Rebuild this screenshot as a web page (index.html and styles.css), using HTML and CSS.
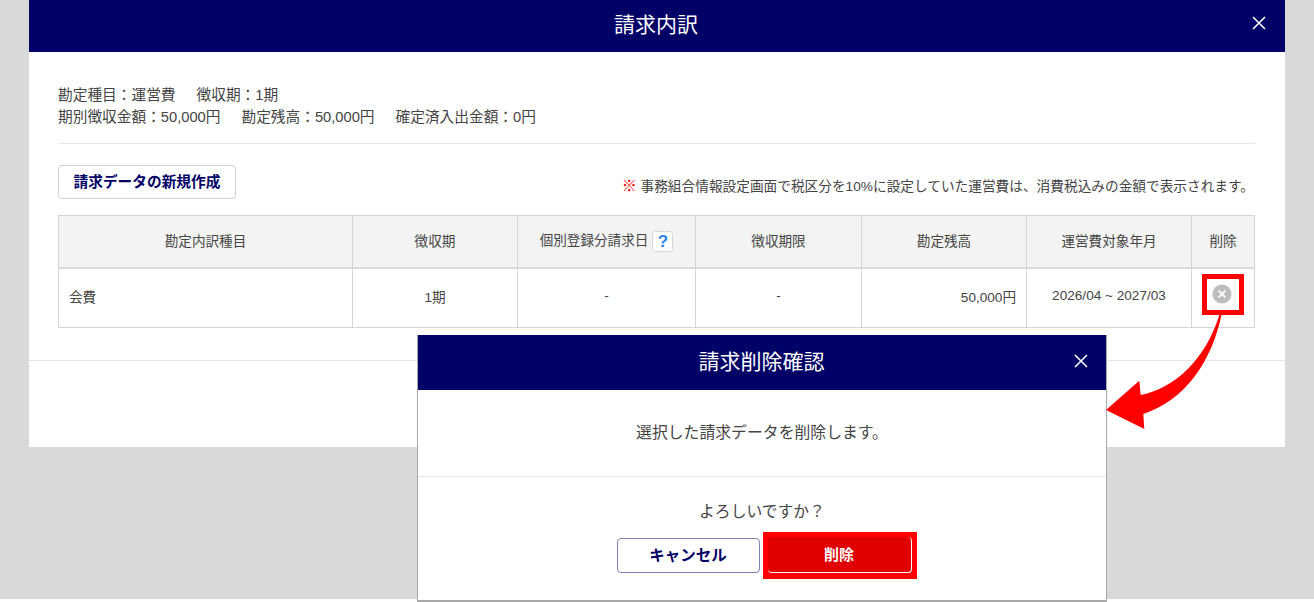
FILE: index.html
```html
<!DOCTYPE html>
<html lang="ja">
<head>
<meta charset="utf-8">
<title>請求内訳</title>
<link rel="stylesheet" href="styles.css">
</head>
<body>
<div class="stage">
  <main class="modal">
    <header class="modal-head">
      <h1 class="modal-title">請求内訳</h1>
      <svg class="close close-main" viewBox="0 0 14 14"><path d="M1 1l12 12M13 1L1 13"/></svg>
    </header>
    <section class="modal-body">
      <div class="summary">
        <p class="summary-line"><span>勘定種目：運営費</span><span>徴収期：1期</span></p>
        <p class="summary-line"><span>期別徴収金額：50,000円</span><span>勘定残高：50,000円</span><span>確定済入出金額：0円</span></p>
      </div>
      <div class="toolbar">
        <button class="btn-new">請求データの新規作成</button>
        <p class="note"><span class="note-mark">※</span> 事務組合情報設定画面で税区分を10%に設定していた運営費は、消費税込みの金額で表示されます。</p>
      </div>
      <table class="grid">
        <colgroup>
          <col class="c1"><col class="c2"><col class="c3"><col class="c4"><col class="c5"><col class="c6"><col class="c7">
        </colgroup>
        <thead>
          <tr>
            <th>勘定内訳種目</th>
            <th>徴収期</th>
            <th>個別登録分請求日<span class="help">?</span></th>
            <th>徴収期限</th>
            <th>勘定残高</th>
            <th>運営費対象年月</th>
            <th>削除</th>
          </tr>
        </thead>
        <tbody>
          <tr>
            <td class="left">会費</td>
            <td>1期</td>
            <td>-</td>
            <td>-</td>
            <td class="right">50,000円</td>
            <td>2026/04 ~ 2027/03</td>
            <td class="cell-del">
              <svg class="del-icon" viewBox="0 0 20 20"><circle cx="10" cy="10" r="9.6"/><path d="M6.6 6.6l6.8 6.8M13.4 6.6l-6.8 6.8"/></svg>
            </td>
          </tr>
        </tbody>
      </table>
    </section>
    <div class="modal-foot"></div>
  </main>

  <div class="hl-icon"></div>

  <section class="dialog">
    <header class="dialog-head">
      <h2 class="dialog-title">請求削除確認</h2>
      <svg class="close close-dialog" viewBox="0 0 14 14"><path d="M1 1l12 12M13 1L1 13"/></svg>
    </header>
    <p class="dialog-msg">選択した請求データを削除します。</p>
    <div class="dialog-foot">
      <p class="dialog-ask">よろしいですか？</p>
      <div class="dialog-actions">
        <button class="btn-cancel">キャンセル</button>
        <div class="hl-btn"><button class="btn-del">削除</button></div>
      </div>
    </div>
  </section>

  <svg class="arrow" viewBox="0 0 1314 602"><path d="M1219.3 315C1206 358 1176 388 1140.7 395L1139.3 380.7L1106 410L1144.3 429L1143.3 414C1186 400 1212 360 1221.5 315Z"/></svg>
</div>
</body>
</html>
```
FILE: styles.css
```css
* { box-sizing: border-box; }
html, body { margin: 0; padding: 0; background: #fff; }
html { height: 602px; }
body {
  height: 602px;
  padding-bottom: 3px;
  font-family: "Liberation Sans", "Noto Sans CJK JP", sans-serif;
  color: #444;
  font-size: 14px;
}
.stage {
  position: relative;
  width: 1314px;
  height: 599px;
  background: #d9d9d9;
  overflow: visible;
}
.modal {
  width: 1256px;
  height: 447px;
  margin-left: 29px;
  background: #fff;
  display: flex;
  flex-direction: column;
}
.modal-head {
  height: 52px;
  background: #000066;
  display: flex;
  align-items: center;
  justify-content: center;
  position: relative;
  flex: none;
}
.modal-title {
  margin: 0 2px 3px 0;
  color: #fff;
  font-size: 21px;
  font-weight: 400;
  line-height: 1;
}
.close {
  position: absolute;
  width: 14px;
  height: 14px;
  fill: none;
  stroke: #fff;
  stroke-width: 1.6;
}
.close-main { right: 19px; top: 16px; }
.close-dialog { right: 18px; top: 19px; }
.modal-body {
  padding: 32px 30px 0 29px;
  height: 309px;
  flex: none;
  border-bottom: 1px solid #e6e6e6;
}
.summary {
  height: 60px;
  border-bottom: 1px solid #e8e8e8;
}
.summary-line {
  margin: 0;
  height: 22px;
  line-height: 22px;
  font-size: 14.7px;
  display: flex;
  gap: 21px;
}
.toolbar {
  margin-top: 21px;
  height: 50px;
  display: flex;
  justify-content: space-between;
  align-items: flex-start;
  padding-right: 1px;
}
.btn-new {
  width: 178px;
  height: 34px;
  border: 1px solid #d0d0d0;
  border-radius: 4px;
  background: #fff;
  color: #000066;
  font: 700 14.7px "Liberation Sans", "Noto Sans CJK JP", sans-serif;
  padding: 0 0 4px;
}
.note {
  margin: 13px 0 0;
  font-size: 13.68px;
  line-height: 18px;
}
.note-mark { color: #ff0000; font-weight: 700; font-size: 15px; line-height: 1; }
.grid {
  width: 1196px;
  table-layout: fixed;
  border-collapse: collapse;
  font-size: 13.6px;
}
.c1 { width: 294px; }
.c2 { width: 165px; }
.c3 { width: 178px; }
.c4 { width: 166px; }
.c5 { width: 165px; }
.c6 { width: 165px; }
.c7 { width: 63px; }
.grid th, .grid td {
  border: 1px solid #d4d4d4;
  text-align: center;
  padding: 0 10px 2px;
  font-weight: 400;
}
.grid td { padding-bottom: 4px; }
.grid th {
  height: 52px;
  background: #f3f3f3;
  border-bottom: 2px solid #d9d9d9;
}
.grid td { height: 60px; }
.grid td.left { text-align: left; }
.grid td.right { text-align: right; }
.help {
  display: inline-block;
  width: 21px;
  height: 21px;
  margin-left: 4px;
  border: 1px solid #d6d6d6;
  border-radius: 3px;
  background: #fff;
  color: #2f80ed;
  font-size: 17px;
  font-weight: 700;
  line-height: 19px;
  text-align: center;
  vertical-align: middle;
}
.grid .cell-del { padding: 0 2px 7px 0; }
.del-icon {
  display: block;
  width: 20px;
  height: 20px;
  margin: 0 auto;
}
.del-icon circle { fill: #bdbdbd; }
.del-icon path { fill: none; stroke: #fff; stroke-width: 2; }
.modal-foot { flex: 1; }
.hl-icon {
  position: absolute;
  left: 1202px;
  top: 274px;
  width: 42px;
  height: 41px;
  border: 5px solid #ff0000;
}
.dialog {
  position: absolute;
  left: 417px;
  top: 335px;
  width: 690px;
  height: 267px;
  background: #fff;
  border: 1px solid #a9a9a9;
  border-bottom-width: 2px;
  border-top: 0;
  display: flex;
  flex-direction: column;
}
.dialog-head {
  height: 55px;
  background: #000066;
  display: flex;
  align-items: center;
  justify-content: center;
  position: relative;
  flex: none;
}
.dialog-title {
  margin: 0 1px 2px 0;
  color: #fff;
  font-size: 21px;
  font-weight: 400;
  line-height: 1;
}
.dialog-msg {
  margin: 0;
  height: 87px;
  line-height: 85px;
  text-align: center;
  font-size: 15.85px;
  border-bottom: 1px solid #e4e4e4;
  flex: none;
}
.dialog-foot {
  display: flex;
  flex-direction: column;
  align-items: center;
}
.dialog-ask {
  margin: 24px 0 0;
  height: 22px;
  line-height: 22px;
  font-size: 15.8px;
}
.dialog-actions {
  display: flex;
  align-items: center;
  gap: 3px;
  margin: 9px 0 0 9px;
}
.btn-cancel {
  width: 143px;
  height: 35px;
  border: 1px solid #7f7fb2;
  border-radius: 4px;
  background: #fff;
  color: #000066;
  font: 700 15.5px "Liberation Sans", "Noto Sans CJK JP", sans-serif;
  padding: 0 0 4px;
}
.hl-btn {
  width: 154px;
  height: 47px;
  background: #ff0000;
  padding: 5px;
}
.btn-del {
  display: block;
  width: 144px;
  height: 36px;
  border: 0;
  border-right: 1px solid #fff;
  border-bottom: 1px solid #fff;
  border-radius: 4px;
  background: #e00000;
  color: #fff;
  font: 700 15px "Liberation Sans", "Noto Sans CJK JP", sans-serif;
  padding: 0 0 3px;
}
.arrow {
  position: absolute;
  left: 0;
  top: 0;
  width: 1314px;
  height: 602px;
  pointer-events: none;
}
.arrow path { fill: #ff0000; }
```
